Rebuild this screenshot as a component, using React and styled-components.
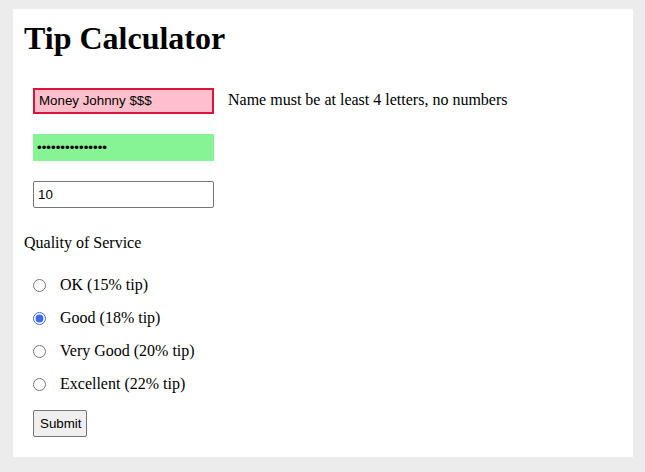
import React, { useState } from "react";
import styled, { createGlobalStyle } from "styled-components";

const Global = createGlobalStyle`
  html, body { margin: 0; padding: 0; background: #ececec; }
  body { font-family: "Liberation Serif", "Times New Roman", serif; font-size: 16px; color: #000; }
`;

const Page = styled.div`
  padding: 9px 12px 15px 13px;
`;

const Panel = styled.div`
  background: #fff;
  width: 620px;
  height: 448px;
  box-sizing: border-box;
  padding: 0 11px;
  overflow: hidden;
`;

const Title = styled.h1`
  font-family: "Liberation Serif", "Times New Roman", serif;
  font-size: 32px;
  font-weight: bold;
  margin: 11px 0 0;
  line-height: normal;
`;

const Form = styled.form`
  display: flex;
  flex-direction: column;
  margin-top: 30px;
`;

const FieldRow = styled.div`
  display: flex;
  align-items: center;
  gap: 14px;
  padding-left: 9px;
  height: 27px;
  margin-bottom: 20px;
`;

const TextInput = styled.input`
  box-sizing: border-box;
  width: 181px;
  height: ${(p) => (p.$tall ? "27px" : "26px")};
  margin: 0;
  padding: 0 4px;
  font-family: "Liberation Sans", Arial, sans-serif;
  font-size: 13.33px;
  color: #000;
  outline: none;
  border-radius: ${(p) => (p.$variant === "plain" ? "2px" : "0")};
  border: ${(p) =>
    p.$variant === "error"
      ? "2px solid #dc143c"
      : p.$variant === "valid"
      ? "none"
      : "1px solid #767676"};
  background: ${(p) =>
    p.$variant === "error" ? "#ffc0cb" : p.$variant === "valid" ? "#86f394" : "#fff"};
`;

const ErrorText = styled.span`
  font-size: 16px;
  margin-top: -2px;
`;

const SectionLabel = styled.div`
  margin-top: 6px;
  margin-bottom: 23px;
  line-height: 18px;
`;

const RadioRow = styled.label`
  display: flex;
  align-items: center;
  gap: 14px;
  height: 20px;
  padding-left: 9px;
  margin-bottom: 13px;
`;

const Radio = styled.input`
  width: 13px;
  height: 13px;
  margin: 0;
  accent-color: #3f68f4;
`;

const SubmitButton = styled.button`
  align-self: flex-start;
  margin: 3px 0 0 9px;
  height: 27px;
  padding: 0 6px;
  width: 54px;
  font-family: "Liberation Sans", Arial, sans-serif;
  font-size: 13.33px;
  color: #000;
  background: #efefef;
  border: 1px solid #767676;
  border-radius: 2px;
`;

const options = [
  { id: "ok", label: "OK (15% tip)" },
  { id: "good", label: "Good (18% tip)" },
  { id: "vgood", label: "Very Good (20% tip)" },
  { id: "exc", label: "Excellent (22% tip)" },
];

export default function App() {
  const [quality, setQuality] = useState("good");
  return (
    <Page>
      <Global />
      <Panel>
        <Title>Tip Calculator</Title>
        <Form onSubmit={(e) => e.preventDefault()}>
          <FieldRow>
            <TextInput $variant="error" defaultValue="Money Johnny $$$" />
            <ErrorText>Name must be at least 4 letters, no numbers</ErrorText>
          </FieldRow>
          <FieldRow>
            <TextInput $variant="valid" $tall type="password" defaultValue="supersecret1234" />
          </FieldRow>
          <FieldRow>
            <TextInput $variant="plain" $tall type="text" defaultValue="10" />
          </FieldRow>
          <SectionLabel>Quality of Service</SectionLabel>
          {options.map((o) => (
            <RadioRow key={o.id}>
              <Radio
                type="radio"
                name="quality"
                checked={quality === o.id}
                onChange={() => setQuality(o.id)}
              />
              {o.label}
            </RadioRow>
          ))}
          <SubmitButton type="submit">Submit</SubmitButton>
        </Form>
      </Panel>
    </Page>
  );
}
